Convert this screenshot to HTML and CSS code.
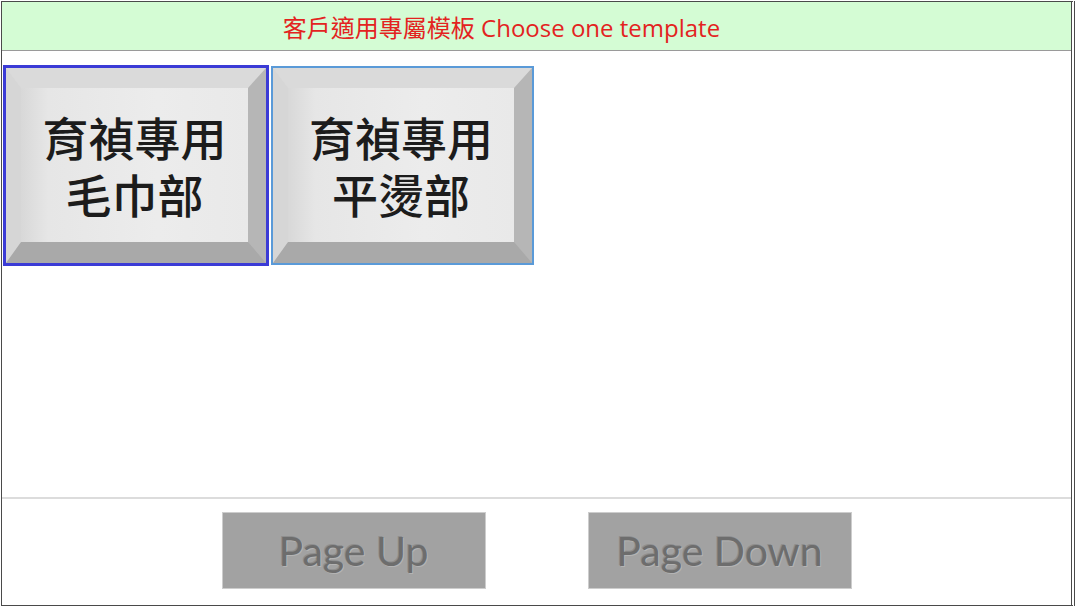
FILE: index.html
```html
<!DOCTYPE html>
<html lang="zh-Hant">
<head>
<meta charset="utf-8">
<title>Choose one template</title>
<link rel="stylesheet" href="styles.css">
</head>
<body>
<div class="frame">
  <div class="header">客戶適用專屬模板 Choose one template</div>
  <div class="content">
    <div class="tile tile-active">
      <div class="bevel">
        <div class="face">
          <span class="line">育禎專用</span>
          <span class="line">毛巾部</span>
        </div>
      </div>
    </div>
    <div class="tile tile-normal">
      <div class="bevel">
        <div class="face">
          <span class="line">育禎專用</span>
          <span class="line">平燙部</span>
        </div>
      </div>
    </div>
  </div>
  <div class="footer">
    <div class="page-btn">Page Up</div>
    <div class="page-btn">Page Down</div>
  </div>
</div>
</body>
</html>
```
FILE: styles.css
```css
html, body {
  margin: 0;
  padding: 0;
  background: #ffffff;
}
body {
  font-family: "Open Sans", "Noto Sans CJK TC", sans-serif;
}
.frame {
  margin: 1px 0 0 1px;
  width: 1069px;
  height: 603px;
  border: 1px solid #4a4a4a;
  border-right: 4px double #4a4a4a;
  display: flex;
  flex-direction: column;
  box-sizing: content-box;
}
.header {
  height: 48px;
  flex: none;
  background: #d4fcd4;
  border-bottom: 1px solid #9a9a9a;
  display: flex;
  align-items: center;
  justify-content: center;
  padding-right: 70px;
  color: #e3231f;
  font-size: 24px;
  font-family: "Open Sans", "Noto Sans CJK TC", sans-serif;
}
.content {
  flex: 1;
  display: flex;
  align-items: flex-start;
  gap: 2px;
  padding: 14px 0 0 1px;
  border-bottom: 2px solid #dcdcdc;
}
.tile {
  width: 266px;
  height: 201px;
  box-sizing: border-box;
  display: flex;
}
.tile-active {
  border: 3px solid #3b3bd6;
}
.tile-normal {
  margin-top: 1px;
  width: 263px;
  height: 199px;
  border: 2px solid #5a9ad8;
}
.bevel {
  flex: 1;
  display: flex;
  box-sizing: border-box;
  border-style: solid;
  border-width: 20px 18px 21px 15px;
  border-color: #dadada #b6b6b6 #a9a9a9 #d6d6d6;
  background: #e8e8e8;
}
.face {
  flex: 1;
  display: flex;
  flex-direction: column;
  align-items: center;
  justify-content: center;
  text-align: center;
  background: linear-gradient(to right, #d8d8d8 0%, #e6e6e6 12%, #ececec 60%, #e9e9e9 100%);
  font-family: "Noto Sans CJK TC", sans-serif;
  font-weight: 500;
  font-size: 46px;
  color: #1c1c1c;
}
.line {
  display: block;
  height: 57px;
  line-height: 57px;
  white-space: nowrap;
}
.footer {
  height: 106px;
  flex: none;
  display: flex;
  justify-content: center;
  align-items: flex-start;
  gap: 102px;
  padding-top: 13px;
  box-sizing: border-box;
}
.page-btn {
  width: 264px;
  height: 77px;
  box-sizing: border-box;
  background: #a2a2a2;
  border: 1px solid #cdcdcd;
  display: flex;
  align-items: center;
  justify-content: center;
  font-family: Lato, "Open Sans", sans-serif;
  font-size: 41px;
  color: #6d6d6d;
  text-shadow: 1px 1px 0 #b4b4b4, -1px -1px 0 #8e8e8e;
}
```
